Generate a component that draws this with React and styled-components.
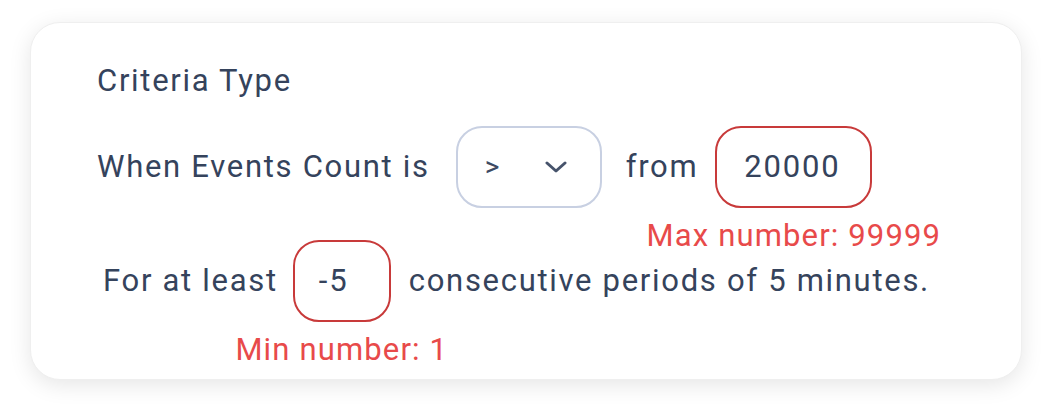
import React from "react";
import styled, { createGlobalStyle } from "styled-components";

const GlobalStyle = createGlobalStyle`
  html, body {
    margin: 0;
    padding: 0;
    background: #ffffff;
  }
  body {
    font-family: Roboto, "Liberation Sans", sans-serif;
  }
`;

const Page = styled.div`
  padding: 22px 29px 33px 30px;
`;

const Card = styled.section`
  box-sizing: border-box;
  height: 358px;
  background: #ffffff;
  border: 1px solid #efefef;
  border-radius: 30px;
  box-shadow: 0 5px 22px rgba(0, 0, 0, 0.1);
  padding: 40px 0 0 66px;
  display: flex;
  flex-direction: column;
`;

const Title = styled.h3`
  margin: 0 0 27px 0;
  font-size: 31px;
  font-weight: 400;
  line-height: 36px;
  letter-spacing: 1.7px;
  color: #35435c;
`;

const Row = styled.div`
  display: flex;
  align-items: center;
  padding-left: ${(p) => p.$indent || 0}px;
  margin-bottom: ${(p) => p.$spaceBelow || 0}px;
`;

const Label = styled.span`
  font-size: 31px;
  line-height: 36px;
  letter-spacing: 1.7px;
  color: #35435c;
  white-space: nowrap;
`;

const Field = styled.div`
  position: relative;
  margin-left: ${(p) => p.$left}px;
  margin-right: ${(p) => p.$right}px;
`;

const Box = styled.div`
  box-sizing: border-box;
  width: ${(p) => p.$width}px;
  height: 82px;
  border: 2px solid ${(p) => (p.$error ? "#c83a3a" : "#c8d0e2")};
  border-radius: 26px;
  display: flex;
  align-items: center;
  padding-left: ${(p) => p.$padLeft}px;
  background: #ffffff;
`;

const Value = styled.span`
  font-size: 31px;
  line-height: 36px;
  letter-spacing: 1.8px;
  color: #35435c;
`;

const Operator = styled.span`
  font-size: 28px;
  line-height: 30px;
  color: #3d4a63;
  width: 60px;
`;

const ErrorText = styled.div`
  position: absolute;
  top: calc(100% + 10px);
  left: 50%;
  transform: translateX(-50%);
  white-space: nowrap;
  font-size: 31px;
  line-height: 36px;
  letter-spacing: 1.15px;
  color: #e84a4a;
`;

const Chevron = () => (
  <svg width="22" height="12" viewBox="0 0 22 12" fill="none">
    <path d="M2 2 L11 10 L20 2" stroke="#46536b" strokeWidth="3" strokeLinecap="round" strokeLinejoin="round" />
  </svg>
);

export default function App() {
  return (
    <>
      <GlobalStyle />
      <Page>
        <Card>
          <Title>Criteria Type</Title>
          <Row $spaceBelow={32}>
            <Label>When Events Count is</Label>
            <Field $left={26} $right={24}>
              <Box $width={146} $padLeft={27}>
                <Operator>&gt;</Operator>
                <Chevron />
              </Box>
            </Field>
            <Label>from</Label>
            <Field $left={17} $right={0}>
              <Box $width={157} $padLeft={27} $error>
                <Value>20000</Value>
              </Box>
              <ErrorText>Max number: 99999</ErrorText>
            </Field>
          </Row>
          <Row $indent={6}>
            <Label>For at least</Label>
            <Field $left={15} $right={18}>
              <Box $width={98} $padLeft={24} $error>
                <Value>-5</Value>
              </Box>
              <ErrorText>Min number: 1</ErrorText>
            </Field>
            <Label>consecutive periods of 5 minutes.</Label>
          </Row>
        </Card>
      </Page>
    </>
  );
}
